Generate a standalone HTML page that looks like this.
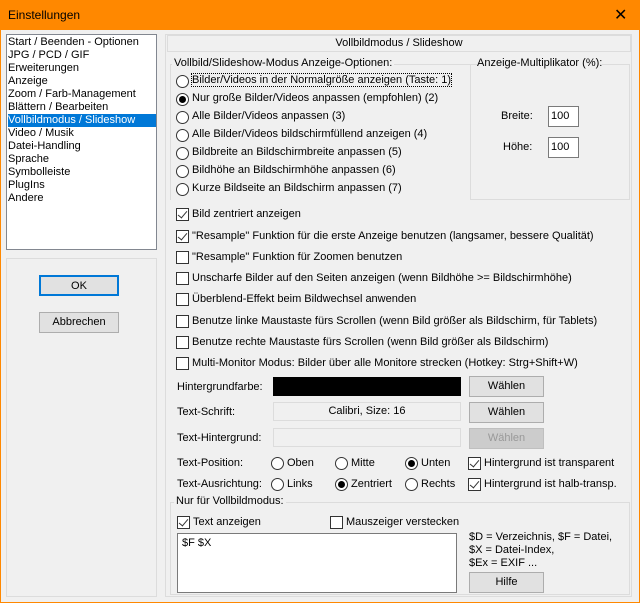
<!DOCTYPE html><html><head><style>
*{margin:0;padding:0;box-sizing:border-box}
body{width:640px;height:603px;background:#f80;font-family:"Liberation Sans",sans-serif;font-size:11px;color:#000;position:relative;overflow:hidden}
.a{position:absolute;white-space:nowrap}
#win{position:absolute;left:1px;top:30px;width:638px;height:572px;background:#f0f0f0}
.rb{position:absolute;width:13px;height:13px;border:1px solid #333;border-radius:50%;background:#fff}
.rb.on::after{content:"";position:absolute;left:2px;top:2px;width:7px;height:7px;border-radius:50%;background:#000}
.cb{position:absolute;width:13px;height:13px;border:1px solid #333;background:#fff}
.cb.on::after{content:"";position:absolute;left:3px;top:0px;width:4px;height:8px;border:solid #333;border-width:0 1.5px 1.5px 0;transform:rotate(40deg)}
.btn{position:absolute;background:#e1e1e1;border:1px solid #adadad;text-align:center}
.box{position:absolute;border:1px solid #dcdcdc}
</style></head><body>
<div class="a" style="left:8px;top:8px;font-size:12px">Einstellungen</div>
<div class="a" style="left:614px;top:5px;font-size:16px">✕</div>
<div id="win"></div>
<!-- list -->
<div class="a" style="left:6px;top:34px;width:151px;height:216px;background:#fff;border:1px solid #828790"></div>
<div class="a" style="left:8px;top:36px;line-height:13px;font-size:11px">Start / Beenden - Optionen<br>JPG / PCD / GIF<br>Erweiterungen<br>Anzeige<br>Zoom / Farb-Management<br>Blättern / Bearbeiten<br><span style="background:#0078d7;color:#fff;display:inline-block;width:148px">Vollbildmodus / Slideshow</span><br>Video / Musik<br>Datei-Handling<br>Sprache<br>Symbolleiste<br>PlugIns<br>Andere</div>
<div class="box" style="left:6px;top:258px;width:151px;height:339px"></div>
<div class="btn" style="left:39px;top:275px;width:80px;height:21px;line-height:19px;border:2px solid #0078d7">OK</div>
<div class="btn" style="left:39px;top:312px;width:80px;height:21px;line-height:19px">Abbrechen</div>
<!-- right -->
<div class="box" style="left:165px;top:34px;width:467px;height:563px"></div>
<div class="a" style="left:167px;top:35px;width:464px;height:17px;border:1px solid #dcdcdc;text-align:center;line-height:15px;font-size:11px">Vollbildmodus / Slideshow</div>
<div class="box" style="left:170px;top:64px;width:300px;height:136px;border-right:none;border-bottom:none"></div>
<div class="a" style="left:172px;top:57px;background:#f0f0f0;padding:0 2px">Vollbild/Slideshow-Modus Anzeige-Optionen:</div>
<div class="box" style="left:470px;top:64px;width:160px;height:136px"></div>
<div class="a" style="left:477px;top:57px;background:#f0f0f0">Anzeige-Multiplikator (%):</div>
<div class="a" style="left:501px;top:110px">Breite:</div>
<div class="a" style="left:548px;top:106px;width:31px;height:21px;background:#fff;border:1px solid #7a7a7a;padding:3px 2px">100</div>
<div class="a" style="left:503px;top:141px">Höhe:</div>
<div class="a" style="left:548px;top:137px;width:31px;height:21px;background:#fff;border:1px solid #7a7a7a;padding:3px 2px">100</div>
<div class="rb" style="left:176px;top:75px"></div><div class="a" style="left:192px;top:74px;outline:1px dotted #000">Bilder/Videos in der Normalgröße anzeigen (Taste: 1)</div>
<div class="rb on" style="left:176px;top:93px"></div><div class="a" style="left:192px;top:92px">Nur große Bilder/Videos anpassen (empfohlen) (2)</div>
<div class="rb" style="left:176px;top:111px"></div><div class="a" style="left:192px;top:110px">Alle Bilder/Videos anpassen (3)</div>
<div class="rb" style="left:176px;top:129px"></div><div class="a" style="left:192px;top:128px">Alle Bilder/Videos bildschirmfüllend anzeigen (4)</div>
<div class="rb" style="left:176px;top:147px"></div><div class="a" style="left:192px;top:146px">Bildbreite an Bildschirmbreite anpassen (5)</div>
<div class="rb" style="left:176px;top:165px"></div><div class="a" style="left:192px;top:164px">Bildhöhe an Bildschirmhöhe anpassen (6)</div>
<div class="rb" style="left:176px;top:183px"></div><div class="a" style="left:192px;top:182px">Kurze Bildseite an Bildschirm anpassen (7)</div>
<div class="cb on" style="left:176px;top:208px"></div><div class="a" style="left:192px;top:208px">Bild zentriert anzeigen</div>
<div class="cb on" style="left:176px;top:230px"></div><div class="a" style="left:192px;top:230px">"Resample" Funktion für die erste Anzeige benutzen (langsamer, bessere Qualität)</div>
<div class="cb" style="left:176px;top:251px"></div><div class="a" style="left:192px;top:251px">"Resample" Funktion für Zoomen benutzen</div>
<div class="cb" style="left:176px;top:272px"></div><div class="a" style="left:192px;top:272px">Unscharfe Bilder auf den Seiten anzeigen (wenn Bildhöhe &gt;= Bildschirmhöhe)</div>
<div class="cb" style="left:176px;top:293px"></div><div class="a" style="left:192px;top:293px">Überblend-Effekt beim Bildwechsel anwenden</div>
<div class="cb" style="left:176px;top:315px"></div><div class="a" style="left:192px;top:315px">Benutze linke Maustaste fürs Scrollen (wenn Bild größer als Bildschirm, für Tablets)</div>
<div class="cb" style="left:176px;top:336px"></div><div class="a" style="left:192px;top:336px">Benutze rechte Maustaste fürs Scrollen (wenn Bild größer als Bildschirm)</div>
<div class="cb" style="left:176px;top:357px"></div><div class="a" style="left:192px;top:357px">Multi-Monitor Modus: Bilder über alle Monitore strecken (Hotkey: Strg+Shift+W)</div>
<div class="a" style="left:177px;top:381px">Hintergrundfarbe:</div>
<div class="a" style="left:273px;top:377px;width:188px;height:19px;background:#000"></div>
<div class="btn" style="left:469px;top:376px;width:75px;height:21px;line-height:19px">Wählen</div>
<div class="a" style="left:177px;top:406px">Text-Schrift:</div>
<div class="a" style="left:273px;top:402px;width:188px;height:19px;border:1px solid #dcdcdc;text-align:center;line-height:17px">Calibri, Size: 16</div>
<div class="btn" style="left:469px;top:402px;width:75px;height:21px;line-height:19px">Wählen</div>
<div class="a" style="left:177px;top:432px">Text-Hintergrund:</div>
<div class="a" style="left:273px;top:428px;width:188px;height:19px;border:1px solid #dcdcdc"></div>
<div class="btn" style="left:469px;top:428px;width:75px;height:21px;line-height:19px;background:#ccc;border-color:#bfbfbf;color:#999">Wählen</div>
<div class="a" style="left:177px;top:457px">Text-Position:</div>
<div class="rb" style="left:271px;top:457px"></div><div class="a" style="left:287px;top:457px">Oben</div>
<div class="rb" style="left:335px;top:457px"></div><div class="a" style="left:351px;top:457px">Mitte</div>
<div class="rb on" style="left:405px;top:457px"></div><div class="a" style="left:421px;top:457px">Unten</div>
<div class="cb on" style="left:468px;top:457px"></div><div class="a" style="left:484px;top:457px">Hintergrund ist transparent</div>
<div class="a" style="left:177px;top:478px">Text-Ausrichtung:</div>
<div class="rb" style="left:271px;top:478px"></div><div class="a" style="left:287px;top:478px">Links</div>
<div class="rb on" style="left:335px;top:478px"></div><div class="a" style="left:351px;top:478px">Zentriert</div>
<div class="rb" style="left:405px;top:478px"></div><div class="a" style="left:421px;top:478px">Rechts</div>
<div class="cb on" style="left:468px;top:478px"></div><div class="a" style="left:484px;top:478px">Hintergrund ist halb-transp.</div>
<div class="box" style="left:170px;top:502px;width:460px;height:93px"></div>
<div class="a" style="left:174px;top:495px;background:#f0f0f0;padding:0 2px">Nur für Vollbildmodus:</div>
<div class="cb on" style="left:177px;top:516px"></div><div class="a" style="left:193px;top:516px">Text anzeigen</div>
<div class="cb" style="left:330px;top:516px"></div><div class="a" style="left:346px;top:516px">Mauszeiger verstecken</div>
<div class="a" style="left:177px;top:533px;width:280px;height:60px;background:#fff;border:1px solid #7a7a7a;padding:3px 4px">$F $X</div>
<div class="a" style="left:469px;top:531px;line-height:13px">$D = Verzeichnis, $F = Datei,<br>$X = Datei-Index,<br>$Ex = EXIF ...</div>
<div class="btn" style="left:469px;top:572px;width:75px;height:21px;line-height:19px">Hilfe</div>
</body></html>
